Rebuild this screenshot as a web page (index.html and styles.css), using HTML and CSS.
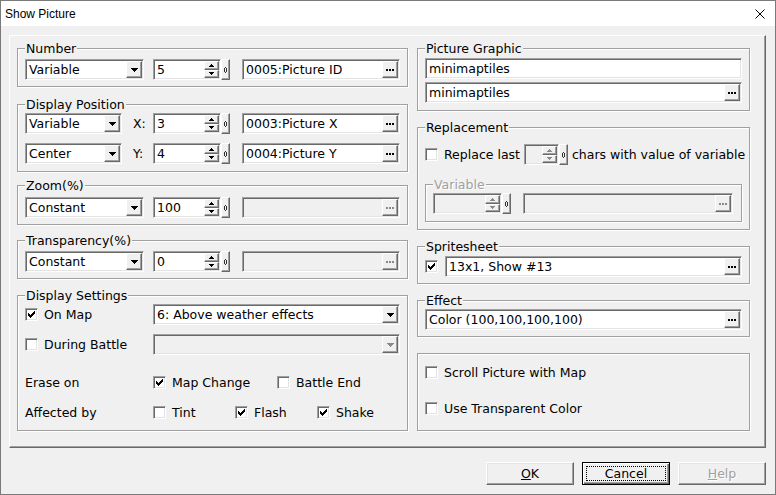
FILE: index.html
```html
<!DOCTYPE html>
<html lang="en">
<head>
    <meta charset="UTF-8">
    <title>Show Picture</title>
    <link rel="stylesheet" href="styles.css">
</head>
<body>
<div class="window">
    <div class="titlebar">
        <span>Show Picture</span>
        <svg class="close" viewBox="0 0 10 10"><path d="M0.5 0.5L9.5 9.5M9.5 0.5L0.5 9.5"/></svg>
    </div>

    <div class="panel">
        <!-- left column -->
        <div class="col left">
            <fieldset class="group g-number">
                <legend>Number</legend>
                <div class="row">
                    <div class="field combo w119"><span class="val">Variable</span><span class="btn-mini drop"><svg class="ico-dn"><use href="#dn7"/></svg></span></div>
                    <div class="spin">
                        <div class="field spin-edit"><span class="val">5</span><span class="updown"><span class="btn-mini"><svg class="ico-ud"><use href="#up5"/></svg></span><span class="btn-mini"><svg class="ico-ud"><use href="#dn5"/></svg></span></span></div>
                        <span class="btn-mini spin-extra"><svg class="ico-dia"><use href="#dia"/></svg></span>
                    </div>
                    <div class="field ref"><span class="val">0005:Picture ID</span><span class="btn-mini dots"><svg class="ico-dots"><use href="#dots"/></svg></span></div>
                </div>
            </fieldset>

            <fieldset class="group g-pos">
                <legend>Display Position</legend>
                <div class="row">
                    <div class="field combo w97"><span class="val">Variable</span><span class="btn-mini drop"><svg class="ico-dn"><use href="#dn7"/></svg></span></div>
                    <span class="axis">X:</span>
                    <div class="spin">
                        <div class="field spin-edit"><span class="val">3</span><span class="updown"><span class="btn-mini"><svg class="ico-ud"><use href="#up5"/></svg></span><span class="btn-mini"><svg class="ico-ud"><use href="#dn5"/></svg></span></span></div>
                        <span class="btn-mini spin-extra"><svg class="ico-dia"><use href="#dia"/></svg></span>
                    </div>
                    <div class="field ref"><span class="val">0003:Picture X</span><span class="btn-mini dots"><svg class="ico-dots"><use href="#dots"/></svg></span></div>
                </div>
                <div class="row r-second">
                    <div class="field combo w97"><span class="val">Center</span><span class="btn-mini drop"><svg class="ico-dn"><use href="#dn7"/></svg></span></div>
                    <span class="axis">Y:</span>
                    <div class="spin">
                        <div class="field spin-edit"><span class="val">4</span><span class="updown"><span class="btn-mini"><svg class="ico-ud"><use href="#up5"/></svg></span><span class="btn-mini"><svg class="ico-ud"><use href="#dn5"/></svg></span></span></div>
                        <span class="btn-mini spin-extra"><svg class="ico-dia"><use href="#dia"/></svg></span>
                    </div>
                    <div class="field ref"><span class="val">0004:Picture Y</span><span class="btn-mini dots"><svg class="ico-dots"><use href="#dots"/></svg></span></div>
                </div>
            </fieldset>

            <fieldset class="group g-zoom">
                <legend>Zoom(%)</legend>
                <div class="row">
                    <div class="field combo w119"><span class="val">Constant</span><span class="btn-mini drop"><svg class="ico-dn"><use href="#dn7"/></svg></span></div>
                    <div class="spin">
                        <div class="field spin-edit"><span class="val">100</span><span class="updown"><span class="btn-mini"><svg class="ico-ud"><use href="#up5"/></svg></span><span class="btn-mini"><svg class="ico-ud"><use href="#dn5"/></svg></span></span></div>
                        <span class="btn-mini spin-extra"><svg class="ico-dia"><use href="#dia"/></svg></span>
                    </div>
                    <div class="field ref off"><span class="val"></span><span class="btn-mini dots"><svg class="ico-dots"><use href="#dots"/></svg></span></div>
                </div>
            </fieldset>

            <fieldset class="group g-trans">
                <legend>Transparency(%)</legend>
                <div class="row">
                    <div class="field combo w119"><span class="val">Constant</span><span class="btn-mini drop"><svg class="ico-dn"><use href="#dn7"/></svg></span></div>
                    <div class="spin">
                        <div class="field spin-edit"><span class="val">0</span><span class="updown"><span class="btn-mini"><svg class="ico-ud"><use href="#up5"/></svg></span><span class="btn-mini"><svg class="ico-ud"><use href="#dn5"/></svg></span></span></div>
                        <span class="btn-mini spin-extra"><svg class="ico-dia"><use href="#dia"/></svg></span>
                    </div>
                    <div class="field ref off"><span class="val"></span><span class="btn-mini dots"><svg class="ico-dots"><use href="#dots"/></svg></span></div>
                </div>
            </fieldset>

            <fieldset class="group g-disp">
                <legend>Display Settings</legend>
                <div class="row">
                    <div class="lbl-col"><label class="chk"><span class="box"><svg class="ico-chk"><use href="#chk"/></svg></span>On Map</label></div>
                    <div class="field combo grow"><span class="val">6: Above weather effects</span><span class="btn-mini drop"><svg class="ico-dn"><use href="#dn7"/></svg></span></div>
                </div>
                <div class="row r-battle">
                    <div class="lbl-col"><label class="chk"><span class="box"></span>During Battle</label></div>
                    <div class="field combo grow off"><span class="val"></span><span class="btn-mini drop"><svg class="ico-dn"><use href="#dn7"/></svg></span></div>
                </div>
                <div class="row r-erase">
                    <div class="lbl-col">Erase on</div>
                    <label class="chk w124"><span class="box"><svg class="ico-chk"><use href="#chk"/></svg></span>Map Change</label>
                    <label class="chk"><span class="box"></span>Battle End</label>
                </div>
                <div class="row r-affect">
                    <div class="lbl-col">Affected by</div>
                    <label class="chk w82"><span class="box"></span>Tint</label>
                    <label class="chk w82"><span class="box"><svg class="ico-chk"><use href="#chk"/></svg></span>Flash</label>
                    <label class="chk"><span class="box"><svg class="ico-chk"><use href="#chk"/></svg></span>Shake</label>
                </div>
            </fieldset>
        </div>

        <!-- right column -->
        <div class="col right">
            <fieldset class="group g-pic">
                <legend>Picture Graphic</legend>
                <div class="field"><span class="val">minimaptiles</span></div>
                <div class="field ref pic2"><span class="val">minimaptiles</span><span class="btn-mini dots"><svg class="ico-dots"><use href="#dots"/></svg></span></div>
            </fieldset>

            <fieldset class="group g-repl">
                <legend>Replacement</legend>
                <div class="row">
                    <span class="box"></span>
                    <span class="repl-lbl">Replace last</span>
                    <div class="spin small off">
                        <div class="field spin-edit"><span class="val"></span><span class="updown"><span class="btn-mini"><svg class="ico-ud"><use href="#up5"/></svg></span><span class="btn-mini"><svg class="ico-ud"><use href="#dn5"/></svg></span></span></div>
                        <span class="btn-mini spin-extra"><svg class="ico-dia"><use href="#dia"/></svg></span>
                    </div>
                    <span class="repl-tail">chars with value of variable</span>
                </div>
                <fieldset class="group g-var">
                    <legend class="dim">Variable</legend>
                    <div class="row">
                        <div class="spin wide off">
                            <div class="field spin-edit"><span class="val"></span><span class="updown"><span class="btn-mini"><svg class="ico-ud"><use href="#up5"/></svg></span><span class="btn-mini"><svg class="ico-ud"><use href="#dn5"/></svg></span></span></div>
                            <span class="btn-mini spin-extra"><svg class="ico-dia"><use href="#dia"/></svg></span>
                        </div>
                        <div class="field ref off"><span class="val"></span><span class="btn-mini dots"><svg class="ico-dots"><use href="#dots"/></svg></span></div>
                    </div>
                </fieldset>
            </fieldset>

            <fieldset class="group g-sprite">
                <legend>Spritesheet</legend>
                <div class="row">
                    <span class="box gap7"><svg class="ico-chk"><use href="#chk"/></svg></span>
                    <div class="field ref"><span class="val">13x1, Show #13</span><span class="btn-mini dots"><svg class="ico-dots"><use href="#dots"/></svg></span></div>
                </div>
            </fieldset>

            <fieldset class="group g-effect">
                <legend>Effect</legend>
                <div class="field ref"><span class="val">Color (100,100,100,100)</span><span class="btn-mini dots"><svg class="ico-dots"><use href="#dots"/></svg></span></div>
            </fieldset>

            <div class="group g-misc">
                <label class="chk"><span class="box"></span>Scroll Picture with Map</label>
                <label class="chk"><span class="box"></span>Use Transparent Color</label>
            </div>
        </div>
    </div>

    <div class="actions">
        <button class="btn"><u>O</u>K</button>
        <button class="btn default"><span class="focus">Cancel</span></button>
        <button class="btn" disabled><u>H</u>elp</button>
    </div>
</div>

<!-- pixel glyphs used by the controls -->
<svg class="sprite">
    <symbol id="dn7" viewBox="0 0 7 4"><path d="M0 0h7v1H0zM1 1h5v1H1zM2 2h3v1H2zM3 3h1v1H3z"/></symbol>
    <symbol id="up5" viewBox="0 0 5 3"><path d="M2 0h1v1H2zM1 1h3v1H1zM0 2h5v1H0z"/></symbol>
    <symbol id="dn5" viewBox="0 0 5 3"><path d="M0 0h5v1H0zM1 1h3v1H1zM2 2h1v1H2z"/></symbol>
    <symbol id="dia" viewBox="0 0 3 6"><path d="M1 0h1v1H1zM0 1h1v4H0zM2 1h1v4H2zM1 5h1v1H1z"/></symbol>
    <symbol id="dots" viewBox="0 0 8 2"><path d="M0 0h2v2H0zM3 0h2v2H3zM6 0h2v2H6z"/></symbol>
    <symbol id="chk" viewBox="0 0 7 7"><path d="M6 0h1v1H6zM5 1h2v1H5zM0 2h1v1H0zM4 2h3v1H4zM0 3h2v1H0zM3 3h3v1H3zM0 4h5v1H0zM1 5h3v1H1zM2 6h1v1H2z"/></symbol>
</svg>
</body>
</html>
```

FILE: styles.css
```css
/* Dialog shell */
* {
    box-sizing: border-box;
}

body {
    margin: 0;
    background: #f0f0f0;
    font-family: "DejaVu Sans", Verdana, sans-serif;
    font-size: 12.5px;
    color: #000;
}

.window {
    width: 776px;
    height: 495px;
    border: 1px solid #7a7a7a;
    background: #f0f0f0;
}

.titlebar {
    height: 25px;
    background: #fff;
    display: flex;
    align-items: center;
    justify-content: space-between;
    padding: 0 10px 0 4px;
    font-family: "Liberation Sans", Arial, sans-serif;
    font-size: 12px;
}

.close {
    width: 10px;
    height: 10px;
    stroke: #000;
    stroke-width: 1;
    fill: none;
}

.panel {
    margin: 9px 9px 0 8px;
    height: 413px;
    border: 1px solid;
    border-color: #fff #696969 #696969 #fff;
    box-shadow: inset -1px -1px #a0a0a0;
    padding: 5px 15px 0 7px;
    display: flex;
    gap: 9px;
}

.col {
    display: flex;
    flex-direction: column;
}

.left {
    width: 391px;
}

.right {
    width: 333px;
}

/* Group boxes */
.group {
    margin: 0;
    min-width: 0;
    border: 1px solid #a0a0a0;
    box-shadow: 1px 1px #fff, inset 1px 1px #fff;
    padding: 3px 7px 6px;
}

.group legend {
    padding: 0 1px;
    line-height: 15px;
    background: #f0f0f0;
}

.group legend.dim {
    color: #a0a0a0;
    text-shadow: 1px 1px #fff;
}

.g-pos { margin-top: 10px; padding-top: 1px; padding-bottom: 7px; }
.g-zoom { margin-top: 6px; padding-top: 4px; }
.g-trans { margin-top: 8px; }
.g-disp { margin-top: 9px; padding-top: 1px; padding-bottom: 7px; }

.g-pic { padding-top: 2px; padding-bottom: 7px; }
.g-repl { margin-top: 9px; padding-top: 9px; padding-bottom: 7px; }
.g-var { margin-top: 12px; padding: 1px 8px 7px 7px; }
.g-sprite { margin-top: 9px; padding-top: 2px; }
.g-effect { margin-top: 9px; padding-top: 1px; }

.g-misc {
    margin-top: 16px;
    height: 78px;
    padding: 10px 7px 0;
    display: flex;
    flex-direction: column;
    gap: 19px;
}

.row {
    display: flex;
    align-items: center;
    height: 21px;
}

.r-second { margin-top: 9px; }
.r-battle { margin-top: 9px; }
.r-erase { margin-top: 17px; }
.r-affect { margin-top: 9px; }

.lbl-col {
    width: 128px;
    flex: none;
}

/* Sunken edit / combo fields */
.field {
    display: flex;
    height: 21px;
    padding: 1px;
    border: 1px solid;
    border-color: #a0a0a0 #fff #fff #a0a0a0;
    box-shadow: inset 1px 1px #696969, inset -1px -1px #e3e3e3;
    background: #fff;
}

.field.off,
.off .field {
    background: #f0f0f0;
}

.val {
    flex: 1;
    padding-left: 2px;
    line-height: 17px;
    white-space: nowrap;
    overflow: hidden;
}

.w119 { width: 119px; flex: none; }
.w97 { width: 97px; flex: none; }
.grow { flex: 1; }

.ref {
    flex: 1;
}

.pic2 {
    margin-top: 3px;
}

.axis {
    width: 31px;
    padding-left: 11px;
    flex: none;
}

/* Raised mini buttons */
.btn-mini {
    display: flex;
    align-items: center;
    justify-content: center;
    flex: none;
    background: #f0f0f0;
    border: 1px solid;
    border-color: #fff #696969 #696969 #fff;
    box-shadow: inset -1px -1px #a0a0a0;
    color: #000;
}

.off .btn-mini {
    color: #8a8a8a;
}

.drop,
.dots {
    width: 16px;
}

.ico-dn { width: 7px; height: 4px; display: block; fill: currentColor; }
.ico-ud { width: 5px; height: 3px; display: block; fill: currentColor; }
.ico-dia { width: 3px; height: 6px; display: block; fill: #303030; }
.ico-dots { width: 8px; height: 2px; display: block; fill: currentColor; }
.ico-chk { width: 7px; height: 7px; display: block; fill: #000; }

/* Spin edits */
.spin {
    display: flex;
    width: 77px;
    height: 21px;
    margin-left: 9px;
    flex: none;
}

.axis + .spin {
    margin-left: 0;
}

.spin + .ref {
    margin-left: 12px;
}

.spin-edit {
    flex: 1;
}

.updown {
    width: 15px;
    display: flex;
    flex-direction: column;
    flex: none;
}

.updown .btn-mini {
    flex: 1;
}

.spin-extra {
    width: 9px;
}

.spin.small {
    width: 44px;
    margin-left: 0;
}

.spin.wide {
    width: 78px;
    margin-left: 0;
}

/* Checkboxes */
.chk {
    display: flex;
    align-items: center;
    height: 17px;
    white-space: nowrap;
}

.box {
    width: 13px;
    height: 13px;
    flex: none;
    padding: 2px;
    margin-right: 6px;
    background: #fff;
    border: 1px solid;
    border-color: #a0a0a0 #fff #fff #a0a0a0;
    box-shadow: inset 1px 1px #696969, inset -1px -1px #e3e3e3;
}

.box.gap7 {
    margin-right: 7px;
}

.w124 { width: 124px; flex: none; }
.w82 { width: 82px; flex: none; }

.repl-lbl {
    width: 80px;
    flex: none;
}

.repl-tail {
    margin-left: 4px;
    white-space: nowrap;
}

/* Dialog buttons */
.actions {
    display: flex;
    justify-content: flex-end;
    gap: 8px;
    margin: 14px 9px 0 0;
}

.btn {
    width: 88px;
    height: 23px;
    padding: 0;
    display: flex;
    align-items: center;
    justify-content: center;
    font: inherit;
    color: #000;
    background: #f0f0f0;
    border: 1px solid;
    border-color: #fff #696969 #696969 #fff;
    box-shadow: inset -1px -1px #a0a0a0, inset 1px 1px #e3e3e3;
}

.btn.default {
    border: 1px solid #000;
    box-shadow: inset 1px 1px #fff, inset -1px -1px #696969, inset -2px -2px #a0a0a0;
}

.btn .focus {
    align-self: stretch;
    flex: 1;
    margin: 3px;
    border: 1px dotted #000;
    display: flex;
    align-items: center;
    justify-content: center;
}

.btn:disabled {
    color: #a0a0a0;
    text-shadow: 1px 1px #fff;
}

.sprite {
    display: block;
    width: 0;
    height: 0;
}
```
